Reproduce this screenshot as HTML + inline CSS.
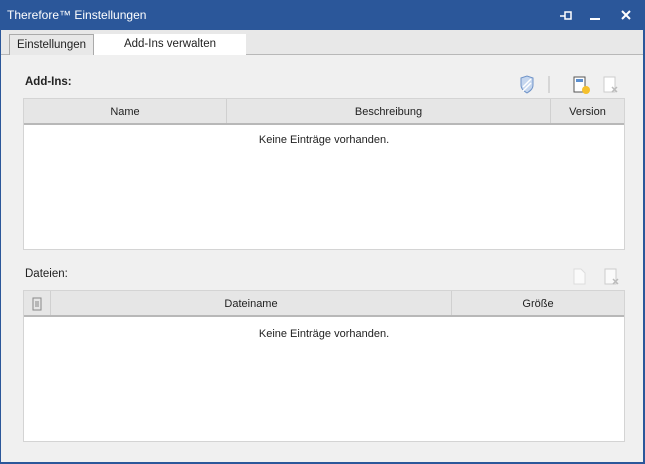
<!DOCTYPE html>
<html><head><meta charset="utf-8"><style>
*{margin:0;padding:0;box-sizing:border-box}
body{width:645px;height:464px;overflow:hidden;font-family:"Liberation Sans",sans-serif;font-size:11px;color:#222;background:#2b579a;position:relative}
.abs{position:absolute}
.title{left:7px;top:8px;color:#fff;font-size:12px}
.content{left:1px;top:30px;width:642px;height:432px;background:#f0f0f0}
.tabbar{left:1px;top:30px;width:642px;height:25px;background:#e8e8e8;border-bottom:1px solid #b8b8b8}
.tab{top:34px;height:21px;text-align:center;line-height:21px;font-size:11.5px}
.tbl{background:#fff;border:1px solid #d4d4d4}
.hdr{position:absolute;left:0;top:0;right:0;height:26px;background:#e6e6e6;border-bottom:2px solid #b8b8b8}
.col{position:absolute;top:0;height:24px;line-height:27px;text-align:center;border-right:1px solid #d0d0d0}
.empty{position:absolute;left:0;right:0;text-align:center}
</style></head><body>
<div class="abs title">Therefore™ Einstellungen</div>
<svg class="abs" style="left:556px;top:9px" width="80" height="14">
<g stroke="#fff" stroke-width="2" fill="none"><path d="M4 7h5M9 3h6v7h-6z" stroke-width="1.5"/><path d="M34 10h10"/><path d="M66 2l8 8M74 2l-8 8"/></g></svg>
<div class="abs content"></div>
<div class="abs tabbar"></div>
<div class="abs tab" style="left:9px;width:85px;border:1px solid #aaa;border-bottom:none;background:#e8e8e8">Einstellungen</div>
<div class="abs tab" style="left:94px;width:152px;background:#fff">Add-Ins verwalten</div>

<div class="abs" style="left:25px;top:76px;font-weight:bold;font-size:11.5px">Add-Ins:</div>
<svg class="abs" style="left:518px;top:74px" width="110" height="22">
<path d="M3 4l6-2 6 2v7c0 4-3 6-6 8-3-2-6-4-6-8z" fill="#c5d6ee" stroke="#6f93c8"/>
<path d="M5 13l8-8M5 17l8-8" stroke="#fff" stroke-width="1.5"/>
<path d="M31 2v17" stroke="#bbb"/>
<rect x="56" y="3" width="11" height="15" fill="#fff" stroke="#555"/><rect x="58" y="5" width="7" height="3" fill="#5b8fd0"/>
<circle cx="68" cy="16" r="4" fill="#f5c02c"/>
<rect x="86" y="3" width="11" height="15" fill="#fff" stroke="#ccc"/><path d="M94 13l5 5M99 13l-5 5" stroke="#bbb" stroke-width="1.5"/>
</svg>
<div class="abs tbl" style="left:23px;top:98px;width:602px;height:152px">
<div class="hdr">
<div class="col" style="left:0;width:203px">Name</div>
<div class="col" style="left:203px;width:324px">Beschreibung</div>
<div class="col" style="left:527px;width:73px;border:none">Version</div>
</div>
<div class="empty" style="top:35px">Keine Einträge vorhanden.</div>
</div>

<div class="abs" style="left:25px;top:268px;font-size:11.5px">Dateien:</div>
<svg class="abs" style="left:570px;top:266px" width="60" height="22">
<path d="M4 3h7l4 4v11h-11z" fill="#fafafa" stroke="#ddd"/>
<rect x="35" y="3" width="11" height="15" fill="#fafafa" stroke="#ccc"/><path d="M43 13l5 5M48 13l-5 5" stroke="#bbb" stroke-width="1.5"/>
</svg>
<div class="abs tbl" style="left:23px;top:290px;width:602px;height:152px">
<div class="hdr">
<div class="col" style="left:0;width:27px;line-height:normal"><svg width="10" height="14" style="margin-top:6px"><rect x="1" y="1" width="8" height="12" fill="none" stroke="#888"/><path d="M3 5h4M3 7h4M3 9h4" stroke="#888"/></svg></div>
<div class="col" style="left:27px;width:401px">Dateiname</div>
<div class="col" style="left:428px;width:172px;border:none">Größe</div>
</div>
<div class="empty" style="top:37px">Keine Einträge vorhanden.</div>
</div>
</body></html>
